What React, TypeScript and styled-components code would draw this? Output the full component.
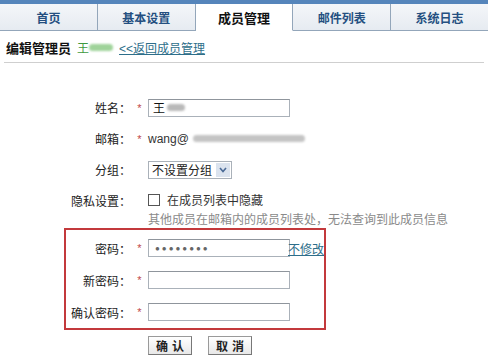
import React from 'react';
import styled, {createGlobalStyle} from 'styled-components';

const GlobalStyle = createGlobalStyle`
    html, body {
        margin:0;
        padding:0;
        background:#fff;
    }
    body {
        font-family: "Liberation Sans", "Noto Sans CJK SC", sans-serif;
        font-size:12px;
        color:#333;
    }
`

const Page = styled.div`
    width:488px;
    height:360px;
    overflow:hidden;
    background:#fff;
`

const TabBar = styled.div`
    display:flex;
    height:31px;
    border-top:4px solid #5585bb;
    box-sizing:border-box;
    background:#fff;
`

const Tab = styled.div<{$active?: boolean}>`
    flex:1;
    display:flex;
    align-items:center;
    justify-content:center;
    font-weight:bold;
    font-size:${({$active}) => $active ? '13px' : '12px'};
    color:${({$active}) => $active ? '#111' : '#244f80'};
    background:${({$active}) => $active ? '#fff' : 'linear-gradient(#f4f6f9, #e6ebf1)'};
    border-right:1px solid #93a6ba;
    border-bottom:${({$active}) => $active ? '1px solid transparent' : '1px solid #93a6ba'};
    &:last-child {
        border-right:none;
    }
`

const Header = styled.div`
    display:flex;
    align-items:center;
    height:32px;
    margin:0 4px;
    padding:2px 2px 0;
    box-sizing:border-box;
    border-bottom:1px solid #cfcfcf;
    gap:6px;
`

const Title = styled.span`
    font-weight:bold;
    font-size:13px;
    color:#111;
`

const NameTag = styled.span`
    display:inline-flex;
    align-items:center;
    color:#3e9a3e;
`

const Blur = styled.span<{$color?: string; $w: number}>`
    display:inline-block;
    width:${({$w}) => $w}px;
    height:7px;
    border-radius:4px;
    background:${({$color}) => $color || '#b9b9b9'};
    filter:blur(1.2px);
    vertical-align:middle;
`

const BackLink = styled.a`
    color:#2d6e8a;
    text-decoration:underline;
    font-size:12px;
    cursor:pointer;
`

const Form = styled.div`
    padding-top:29px;
`

const Row = styled.div<{$h?: number}>`
    display:flex;
    align-items:center;
    height:${({$h}) => $h || 31}px;
`

const Label = styled.div<{$w: number}>`
    width:${({$w}) => $w}px;
    text-align:right;
    color:#222;
    white-space:nowrap;
    flex-shrink:0;
`

const Star = styled.div`
    width:17px;
    text-align:center;
    color:#c04848;
    font-size:11px;
    flex-shrink:0;
`

const Field = styled.div`
    display:flex;
    align-items:center;
    gap:4px;
`

const TextInput = styled.div`
    width:142px;
    height:18px;
    box-sizing:border-box;
    border:1px solid #aab1b9;
    border-top-color:#8f959c;
    background:#fff;
    display:flex;
    align-items:center;
    padding-left:4px;
    gap:2px;
    font-size:12px;
    color:#111;
`

const Dots = styled.span`
    letter-spacing:2px;
    color:#666;
    font-size:8px;
    padding-left:2px;
`

const Select = styled.div`
    display:flex;
    align-items:center;
    height:18px;
    box-sizing:border-box;
    border:1px solid #aab1b9;
    padding-left:3px;
    gap:4px;
    color:#222;
`

const SelectArrow = styled.span`
    width:14px;
    height:14px;
    margin-right:1px;
    background:#dbe3ee;
    display:flex;
    align-items:center;
    justify-content:center;
`

const Check = styled.span`
    width:10px;
    height:10px;
    border:1px solid #555;
    background:#fff;
    margin-right:3px;
`

const PrivacyRow = styled.div`
    display:flex;
    padding-top:6px;
    height:39px;
    box-sizing:border-box;
`

const PrivacyLabel = styled(Label)`
    padding-top:1px;
`

const Hint = styled.div`
    color:#8a8a8a;
    margin-top:2px;
    white-space:nowrap;
`

const PwdBox = styled.div`
    margin:4px 0 0 64px;
    width:262px;
    height:102px;
    box-sizing:border-box;
    border:2px solid #c3393c;
    padding-top:2px;
`

const NoChange = styled.a`
    color:#2d6e8a;
    text-decoration:underline;
    white-space:nowrap;
    margin-left:-2px;
`

const Buttons = styled.div`
    display:flex;
    gap:16px;
    padding:6px 0 0 148px;
`

const Button = styled.button`
    width:44px;
    height:19px;
    padding:0;
    border:1px solid #9a9a9a;
    border-right-color:#777;
    border-bottom-color:#777;
    background:linear-gradient(#ffffff, #e8e8e8);
    font-family:inherit;
    font-size:12px;
    font-weight:bold;
    letter-spacing:4px;
    text-indent:4px;
    color:#222;
`

const ArrowIcon = () => (
    <svg width="8" height="6" viewBox="0 0 8 6">
        <path d="M1 1 L4 4.5 L7 1" fill="none" stroke="#4a6a96" strokeWidth="1.6"/>
    </svg>
)

const tabs = ['首页', '基本设置', '成员管理', '邮件列表', '系统日志'];

const App = () => {
    return (
        <Page>
            <GlobalStyle/>
            <TabBar>
                {tabs.map(t => <Tab key={t} $active={t === '成员管理'}>{t}</Tab>)}
            </TabBar>
            <Header>
                <Title>编辑管理员</Title>
                <NameTag>王<Blur $w={24} $color="#9fd39a"/></NameTag>
                <BackLink>&lt;&lt;返回成员管理</BackLink>
            </Header>
            <Form>
                <Row>
                    <Label $w={131}>姓名：</Label>
                    <Star>*</Star>
                    <TextInput>王<Blur $w={18}/></TextInput>
                </Row>
                <Row>
                    <Label $w={131}>邮箱：</Label>
                    <Star>*</Star>
                    <Field>wang@<Blur $w={112} $color="#c4c4c4"/></Field>
                </Row>
                <Row>
                    <Label $w={131}>分组：</Label>
                    <Star/>
                    <Select>不设置分组<SelectArrow><ArrowIcon/></SelectArrow></Select>
                </Row>
                <PrivacyRow>
                    <PrivacyLabel $w={131}>隐私设置：</PrivacyLabel>
                    <Star/>
                    <div>
                        <Field><Check/>在成员列表中隐藏</Field>
                        <Hint>其他成员在邮箱内的成员列表处，无法查询到此成员信息</Hint>
                    </div>
                </PrivacyRow>
                <PwdBox>
                    <Row $h={32}>
                        <Label $w={65}>密码：</Label>
                        <Star>*</Star>
                        <TextInput><Dots>●●●●●●●●</Dots></TextInput>
                        <NoChange>不修改</NoChange>
                    </Row>
                    <Row $h={32}>
                        <Label $w={65}>新密码：</Label>
                        <Star>*</Star>
                        <TextInput/>
                    </Row>
                    <Row $h={32}>
                        <Label $w={65}>确认密码：</Label>
                        <Star>*</Star>
                        <TextInput/>
                    </Row>
                </PwdBox>
                <Buttons>
                    <Button>确认</Button>
                    <Button>取消</Button>
                </Buttons>
            </Form>
        </Page>
    )
}

export default App;
